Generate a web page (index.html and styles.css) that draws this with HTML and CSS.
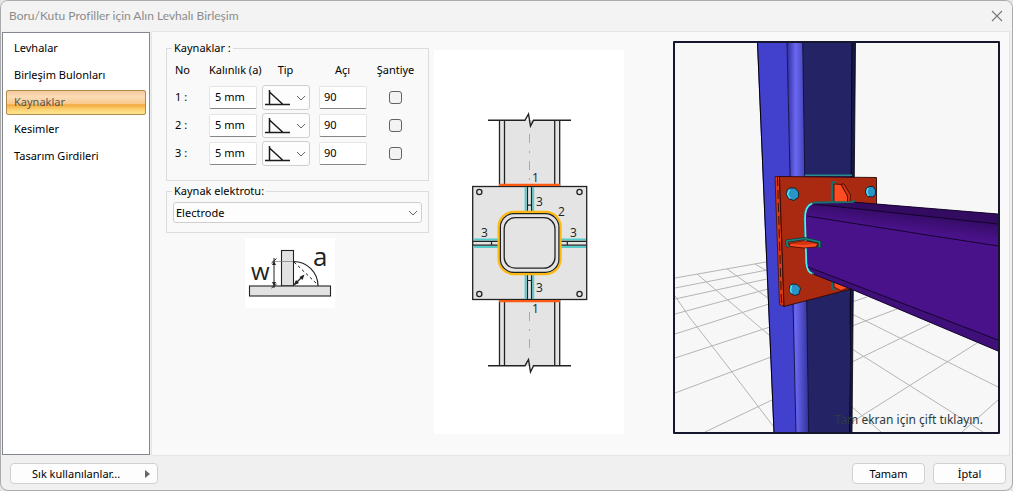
FILE: index.html
```
<!DOCTYPE html>
<html lang="tr">
<head>
    <meta charset="UTF-8">
    <meta name="viewport" content="width=device-width, initial-scale=1.0">
    <title>Boru/Kutu Profiller için Alın Levhalı Birleşim</title>
    <link rel="stylesheet" href="styles.css">
</head>
<body>
    <div class="dialog">
        <header class="titlebar">
            <h1>Boru/Kutu Profiller için Alın Levhalı Birleşim</h1>
            <button type="button" class="close" aria-label="Kapat">
                <svg width="12" height="12" viewBox="0 0 12 12"><path d="M1 1L11 11M11 1L1 11" stroke="#777" stroke-width="1.1"/></svg>
            </button>
        </header>

        <div class="main">
            <nav class="sidebar">
                <a href="#levhalar">Levhalar</a>
                <a href="#bulonlar">Birleşim Bulonları</a>
                <a href="#kaynaklar" class="active">Kaynaklar</a>
                <a href="#kesimler">Kesimler</a>
                <a href="#girdiler">Tasarım Girdileri</a>
            </nav>

            <div class="content">
                <form class="settings">
                    <fieldset class="welds">
                        <legend>Kaynaklar :</legend>
                        <table>
                            <thead>
                                <tr>
                                    <th class="col-no">No</th>
                                    <th class="col-size">Kalınlık (a)</th>
                                    <th class="col-type">Tip</th>
                                    <th class="col-angle">Açı</th>
                                    <th class="col-site">Şantiye</th>
                                </tr>
                            </thead>
                            <tbody>
                                <tr>
                                    <td class="col-no">1 :</td>
                                    <td><input type="text" class="field" value="5 mm" aria-label="Kalınlık 1"></td>
                                    <td>
                                        <div class="type-select">
                                            <select aria-label="Tip 1"><option label=" " value="fillet"></option></select>
                                            <svg viewBox="0 0 48 25"><path d="M3 19.500H28M7.500 19V5M7.500 7L20.500 19" class="weld-mark"/><path d="M35 11L39 15L43 11" class="arrow"/></svg>
                                        </div>
                                    </td>
                                    <td><input type="text" class="field angle" value="90" aria-label="Açı 1"></td>
                                    <td class="col-site"><input type="checkbox" aria-label="Şantiye 1"></td>
                                </tr>
                                <tr>
                                    <td class="col-no">2 :</td>
                                    <td><input type="text" class="field" value="5 mm" aria-label="Kalınlık 2"></td>
                                    <td>
                                        <div class="type-select">
                                            <select aria-label="Tip 2"><option label=" " value="fillet"></option></select>
                                            <svg viewBox="0 0 48 25"><path d="M3 19.500H28M7.500 19V5M7.500 7L20.500 19" class="weld-mark"/><path d="M35 11L39 15L43 11" class="arrow"/></svg>
                                        </div>
                                    </td>
                                    <td><input type="text" class="field angle" value="90" aria-label="Açı 2"></td>
                                    <td class="col-site"><input type="checkbox" aria-label="Şantiye 2"></td>
                                </tr>
                                <tr>
                                    <td class="col-no">3 :</td>
                                    <td><input type="text" class="field" value="5 mm" aria-label="Kalınlık 3"></td>
                                    <td>
                                        <div class="type-select">
                                            <select aria-label="Tip 3"><option label=" " value="fillet"></option></select>
                                            <svg viewBox="0 0 48 25"><path d="M3 19.500H28M7.500 19V5M7.500 7L20.500 19" class="weld-mark"/><path d="M35 11L39 15L43 11" class="arrow"/></svg>
                                        </div>
                                    </td>
                                    <td><input type="text" class="field angle" value="90" aria-label="Açı 3"></td>
                                    <td class="col-site"><input type="checkbox" aria-label="Şantiye 3"></td>
                                </tr>
                            </tbody>
                        </table>
                    </fieldset>

                    <fieldset class="electrode">
                        <legend><label for="electrode">Kaynak elektrotu:</label></legend>
                        <div class="electrode-select">
                            <select id="electrode"><option>Electrode</option></select>
                            <svg width="10" height="6" viewBox="0 0 10 6"><path d="M1 1L5 5L9 1" class="arrow"/></svg>
                        </div>
                    </fieldset>

                    <!-- w / a ölçü şeması -->
                    <svg class="weld-figure" width="90" height="70" viewBox="0 0 90 70">
                        <g fill="#e2e2e2" stroke="#222" stroke-width="1.1">
                            <rect x="36.500" y="12.500" width="12" height="35.500"/>
                            <rect x="4.500" y="48" width="81" height="10"/>
                        </g>
                        <g fill="none" stroke="#222">
                            <path d="M48.500 23.500A24.500 24.500 0 0 1 73 48" stroke-width="1.2"/>
                            <path d="M49 24L73 47" stroke-dasharray="3 2.500"/>
                            <path d="M50 46L58 38" stroke-width="1.300"/>
                            <path d="M29 20V50M26.500 25L31.500 20.500M26.500 50L31.500 46"/>
                            <path d="M27 23.500H48" stroke="#777" stroke-width=".7"/>
                        </g>
                        <path d="M48.500 47.500L54 45L51 42ZM59.500 36.500L54.500 39L57.500 42ZM29 23l-2 4h4zM29 48l-2-4h4z" fill="#222"/>
                        <text x="6" y="41.500" font-size="24">w</text>
                        <text x="68" y="28" font-size="26">a</text>
                    </svg>
                </form>

                <svg class="diagram" width="190" height="384" viewBox="0 0 190 384">
                    <rect x="65.500" y="70" width="60.500" height="246" fill="#e4e4e4"/>
                    <path d="M65.500 70V316M70.500 70V316M120.700 70V316M125.700 70V316" stroke="#222" stroke-width="1.300"/>
                    <path d="M95.500 84V132M95.500 262V304" stroke="#999" stroke-width=".8" stroke-dasharray="9 8 2 8"/>
                    <path d="M54 70.300H91L94.500 64L96.500 76L99.500 70.300H137M54 315.700H91L94.500 309.500L96.500 322L99.500 315.700H137" fill="none" stroke="#222" stroke-width="1.400"/>
                    <rect x="38.700" y="136.500" width="114" height="113" fill="#e4e4e4" stroke="#222" stroke-width="1.300"/>
                    <path d="M65 134.800H126M65 251.200H126" stroke="#ff5a12" stroke-width="2.200"/>
                    <g fill="none" stroke="#222" stroke-width="1.300">
                        <circle cx="45.300" cy="142" r="2.600"/>
                        <circle cx="145.500" cy="142" r="2.600"/>
                        <circle cx="45.300" cy="244" r="2.600"/>
                        <circle cx="145.500" cy="244" r="2.600"/>
                    </g>
                    <path d="M91.600 137V161M99.200 137V161M91.600 225V249M99.200 225V249M39 189.500H64M39 197H64M127 189.500H152M127 197H152" stroke="#55cbcb" stroke-width="2"/>
                    <path d="M93.500 137V161M97.500 137V161M93.500 225V249M97.500 225V249M39 191.300H64M39 195.200H64M127 191.300H152M127 195.200H152M93.500 155.200H97.500M93.500 230.500H97.500M57.500 191V195M133.300 191V195" stroke="#222" stroke-width="1.200"/>
                    <rect x="64.700" y="162" width="61.800" height="62" rx="15" fill="#e4e4e4" stroke="#fcb813" stroke-width="2.400"/>
                    <rect x="66.400" y="163.700" width="58.500" height="58.700" rx="13.500" fill="none" stroke="#222" stroke-width="1.200"/>
                    <rect x="70.200" y="167.700" width="50.800" height="50.500" rx="11" fill="#e4e4e4" stroke="#222" stroke-width="1.300"/>
                    <g font-size="12">
                        <text x="98" y="132">1</text>
                        <text x="102" y="156">3</text>
                        <text x="124" y="166">2</text>
                        <text x="47" y="187">3</text>
                        <text x="136" y="187">3</text>
                        <text x="102" y="242">3</text>
                        <text x="98" y="263">1</text>
                    </g>
                </svg>

                <div class="preview">
                    <svg class="scene" viewBox="5 8 323 389" preserveAspectRatio="xMidYMid slice">
                        <defs>
                            <linearGradient id="edge" x1="0" x2="1">
                                <stop offset="0" stop-color="#2e2d9b"/>
                                <stop offset=".4" stop-color="#6a67f2"/>
                                <stop offset="1" stop-color="#33329a"/>
                            </linearGradient>
                            <linearGradient id="bend" gradientUnits="userSpaceOnUse" x1="230" y1="178" x2="228" y2="194">
                                <stop offset="0" stop-color="#360c68"/>
                                <stop offset="1" stop-color="#4a128a"/>
                            </linearGradient>
                        </defs>
                        <!-- zemin ızgarası -->
                        <path class="grid" d="M5 243L96 227M5 253L97 235M5 264L97 244M5 279L98 254M5 299L99 269M5 323L100 292M5 358L101 322M35 397L102 365M5 261L20 283L42 311L62 337L103 391M27 239L99 300M57 234L98 263M85 229L97 236"/>
                        <path class="grid" d="M182 279L328 352M182 314L313 397M182 372L211 397M182 291L227 274M182 327L260 289M182 387L307 308M292 397L328 365M182 267L197 262"/>
                        <!-- kolon -->
                        <path d="M87 8L103.500 397H127L117 8Z" fill="#4241cd"/>
                        <path d="M87.500 8L104 397" stroke="#000"/>
                        <path d="M132 8H182.500L179 397H138Z" fill="#232366"/>
                        <path d="M182 8H185.500L182 397H179Z" fill="#17174a"/>
                        <path d="M182 8L179.500 397M185.500 8L182 397" stroke="#000" stroke-width=".8"/>
                        <path d="M117 8H132.500L138.500 397H126Z" fill="url(#edge)"/>
                        <path d="M117 8L126 397M132.700 8L138.700 397" stroke="#111140" stroke-width=".9"/>
                        <path d="M135 140.300H182" stroke="#248c8c" stroke-width="1.400"/>
                        <!-- alın levhası -->
                        <path d="M105 141.500H109.500L114 271.500L109.500 269.500Z" fill="#dc3b12" stroke="#3a0c04" stroke-width=".8"/>
                        <path d="M107.500 142L111.500 270" stroke="#3a0c04" stroke-dasharray="9 4"/>
                        <path d="M109.500 141.500L206.500 142.500V200L181 254L114 271.500Z" fill="#a92911" stroke="#2b0804" stroke-width=".9"/>
                        <path d="M162 148V167" stroke="#176e6e" stroke-width="2.200"/>
                        <path d="M161.500 149Q162 146 166 147.500" fill="none" stroke="#176e6e" stroke-width="1.800"/>
                        <path d="M164 149L171 149.500L177.500 161V169H164Z" fill="#ff4c20" stroke="#4a1005" stroke-width=".9"/>
                        <path d="M171 149L174 149L180.500 160L180 168H177.500V161Z" fill="#d43510" stroke="#4a1005" stroke-width=".9"/>
                        <path d="M162 246V253L165 255" fill="none" stroke="#176e6e" stroke-width="2"/>
                        <path d="M164 247L180 252L171 255.500L164 252Z" fill="#ff4c20" stroke="#4a1005" stroke-width=".8"/>
                        <!-- kiriş -->
                        <path d="M136 180Q137 169 146 168L182 167L328 179V316L181 254L143 239Q137 238 136.500 230Z" fill="#4a128a"/>
                        <path d="M143 169L182 167L328 179V189Z" fill="#330c62"/>
                        <path d="M143 169L328 189V211L257 200L137 181Q138 171 143 169Z" fill="url(#bend)"/>
                        <path d="M137 232L328 305V316L181 254L143 239Z" fill="#40107a"/>
                        <path d="M182 167L328 179M143 169L328 189M137 181L257 200L328 211M138 232L328 305M143 239L181 254L328 316" fill="none" stroke="#100222" stroke-width=".9"/>
                        <path d="M144 239Q137 237 136.300 228L134.500 183Q135 168 146 167.500L182 167L185 166" fill="none" stroke="#176e6e" stroke-width="2"/>
                        <path d="M142 238.500Q137 237 136.300 228L135 183Q135 171 142 168.500" fill="none" stroke="#50f0ee" stroke-width="1.700"/>
                        <!-- sol berkitme -->
                        <path d="M119 212L117 210V206L134.500 203.500L149.500 207V213" fill="none" stroke="#0c3c3c" stroke-width="3"/>
                        <path d="M119 211.500L117 210V206L134.500 203.500L149.500 207V212.500" fill="none" stroke="#1d8080" stroke-width="1.600"/>
                        <path d="M119 209L134 206L148 208.500L146 212L134 213L120 211.500Z" fill="#ff4c20" stroke="#4a1005" stroke-width=".9"/>
                        <path d="M119 209L134 206L148 208.500L134 210Z" fill="#d43510"/>
                        <!-- bulonlar -->
                        <g fill="#2994c6" stroke="#07222e" stroke-width=".9">
                            <path d="M117 155L120 153L125 153L128.500 157V162L124 165.500L119 164L116.500 160Z"/>
                            <path d="M196 153.500L199 151.500H203L205.500 155V159L203 162L198 161.500L195.500 158Z"/>
                            <path d="M119.500 251L122 249L127 249.500L130.500 253L129 259L125 260.500L120.500 258.500Z"/>
                        </g>
                        <path d="M119.500 154.500L117.500 159L120 163.500M198 153L196.800 157L198.500 161M121.500 250.500L120.500 255L121.500 258" fill="none" stroke="#55e4ee" stroke-width="1.400"/>
                    </svg>
                    <p class="hint">Tam ekran için çift tıklayın.</p>
                </div>
            </div>
        </div>

        <footer class="footer">
            <button type="button" class="favorites">
                <span>Sık kullanılanlar...</span>
                <svg width="5" height="8" viewBox="0 0 5 8"><path d="M0 0L5 4L0 8Z" fill="#666"/></svg>
            </button>
            <button type="button" class="action">Tamam</button>
            <button type="button" class="action">İptal</button>
        </footer>
    </div>
</body>
</html>
```
FILE: styles.css
```
* {
    margin: 0;
    padding: 0;
    box-sizing: border-box;
}

body {
    font-family: Tahoma, "Noto Sans", sans-serif;
    font-size: 11px;
    line-height: 16px;
    color: #000;
    background: #e4e4e4;
}

button,
input,
select {
    font: inherit;
    color: inherit;
}

.dialog {
    display: flex;
    flex-direction: column;
    min-height: 100vh;
    background: #f0f0f0;
    border: 1px solid #ababab;
    border-radius: 8px;
    overflow: hidden;
}

.titlebar {
    display: flex;
    align-items: center;
    justify-content: space-between;
    height: 30px;
    padding: 0 7px 0 8px;
    background: #f3f3f3;
}

.titlebar h1 {
    font-family: "Segoe UI", Lato, sans-serif;
    font-size: 12px;
    font-weight: 400;
    color: #8c8c8c;
}

.close {
    display: flex;
    padding: 2px;
    border: none;
    background: none;
}

.main {
    display: flex;
    flex: 1;
    padding: 0 2px 0 1px;
}

.sidebar {
    display: flex;
    flex-direction: column;
    gap: 2px;
    width: 148px;
    margin-top: 1px;
    margin-bottom: 1px;
    padding: 3px;
    background: #fff;
    border: 1px solid #828790;
}

.sidebar a {
    height: 25px;
    padding: 0 7px;
    border: 1px solid transparent;
    border-radius: 2px;
    line-height: 21px;
    color: #000;
    text-decoration: none;
}

.sidebar .active {
    color: #555;
    border-color: #b08a4a;
    background: linear-gradient(#f5c79b 0%, #fbdcb8 25%, #f8c98c 55%, #f5a83c 60%, #fcd272 80%, #fee592 100%);
}

.content {
    display: flex;
    flex: 1;
    align-items: flex-start;
    margin-left: 1px;
    padding: 9px 9px 21px 14px;
    background: #f9f9f9;
    border: 1px solid #e5e5e5;
}

.settings {
    display: flex;
    flex-direction: column;
    width: 263px;
}

fieldset {
    border: 1px solid #dcdcdc;
}

legend {
    margin-left: 5px;
    padding: 0 2px;
    line-height: 14px;
}

.welds {
    height: 140px;
}

.welds table {
    width: 240px;
    margin-left: 8px;
    border-collapse: collapse;
    table-layout: fixed;
}

.welds th {
    height: 28px;
    padding-top: 2px;
    font-weight: 400;
    white-space: nowrap;
}

.welds td {
    height: 28px;
}

.welds .col-no {
    width: 34px;
    text-align: left;
}

.col-size {
    width: 53px;
    padding-right: 5px;
}

.col-type {
    width: 57px;
    padding-right: 10px;
}

.col-angle {
    width: 57px;
    padding-right: 10px;
}

.col-site {
    width: 39px;
    text-align: center;
}

.field {
    display: block;
    width: 48px;
    height: 23px;
    padding: 0 5px 2px;
    border: 1px solid #e5e5e5;
    border-bottom-color: #868686;
    border-radius: 2px;
    background: #fff;
}

.angle {
    padding-left: 4px;
}

.type-select {
    display: grid;
    width: 48px;
    height: 25px;
}

.type-select select,
.type-select svg {
    grid-area: 1 / 1;
    width: 100%;
    height: 100%;
}

.type-select svg,
.electrode-select svg {
    pointer-events: none;
}

select {
    appearance: none;
    border: 1px solid #cfcfcf;
    border-radius: 3px;
    background: #fdfdfd;
}

.weld-mark {
    fill: none;
    stroke: #1c1c1c;
    stroke-width: 1.5;
}

.arrow {
    fill: none;
    stroke: #666;
}

input[type="checkbox"] {
    display: block;
    appearance: none;
    width: 13px;
    height: 13px;
    margin: 0 auto;
    border: 1px solid #626262;
    border-radius: 3px;
    background: #f3f3f3;
}

.electrode {
    height: 49px;
    margin-top: 3px;
}

.electrode-select {
    display: grid;
    align-items: center;
    margin: 4px 6px 0;
}

.electrode-select select,
.electrode-select svg {
    grid-area: 1 / 1;
}

.electrode-select select {
    width: 100%;
    height: 21px;
    padding: 0 2px;
}

.electrode-select svg {
    justify-self: end;
    margin-right: 4px;
}

.weld-figure {
    align-self: center;
    margin-top: 5px;
    margin-right: 16px;
    background: #fff;
}

.weld-figure text,
.diagram text {
    font-family: "Segoe UI", "Open Sans", sans-serif;
    fill: #222;
}

.diagram {
    flex: none;
    margin-top: 9px;
    margin-left: 5px;
    background: #fff;
}

.preview {
    position: relative;
    flex: 1;
    align-self: stretch;
    margin-left: 49px;
    border: 2px solid #16162e;
    border-radius: 1px;
    background: #f7f7f7;
}

.scene {
    position: absolute;
    inset: 0;
    width: 100%;
    height: 100%;
}

.grid {
    fill: none;
    stroke: #b4b4b4;
}

.hint {
    position: absolute;
    right: 15px;
    bottom: 3px;
    font-size: 12px;
    line-height: 18px;
    color: #2c3c40;
}

.footer {
    display: flex;
    gap: 8px;
    padding: 7px 6px 6px 9px;
}

.footer button {
    height: 21px;
    border: 1px solid #d0d0d0;
    border-radius: 4px;
    background: #fdfdfd;
}

.footer .favorites {
    display: flex;
    align-items: center;
    justify-content: space-between;
    width: 148px;
    margin-right: auto;
    padding: 0 7px 0 21px;
}

.footer .action {
    width: 73px;
}
```
